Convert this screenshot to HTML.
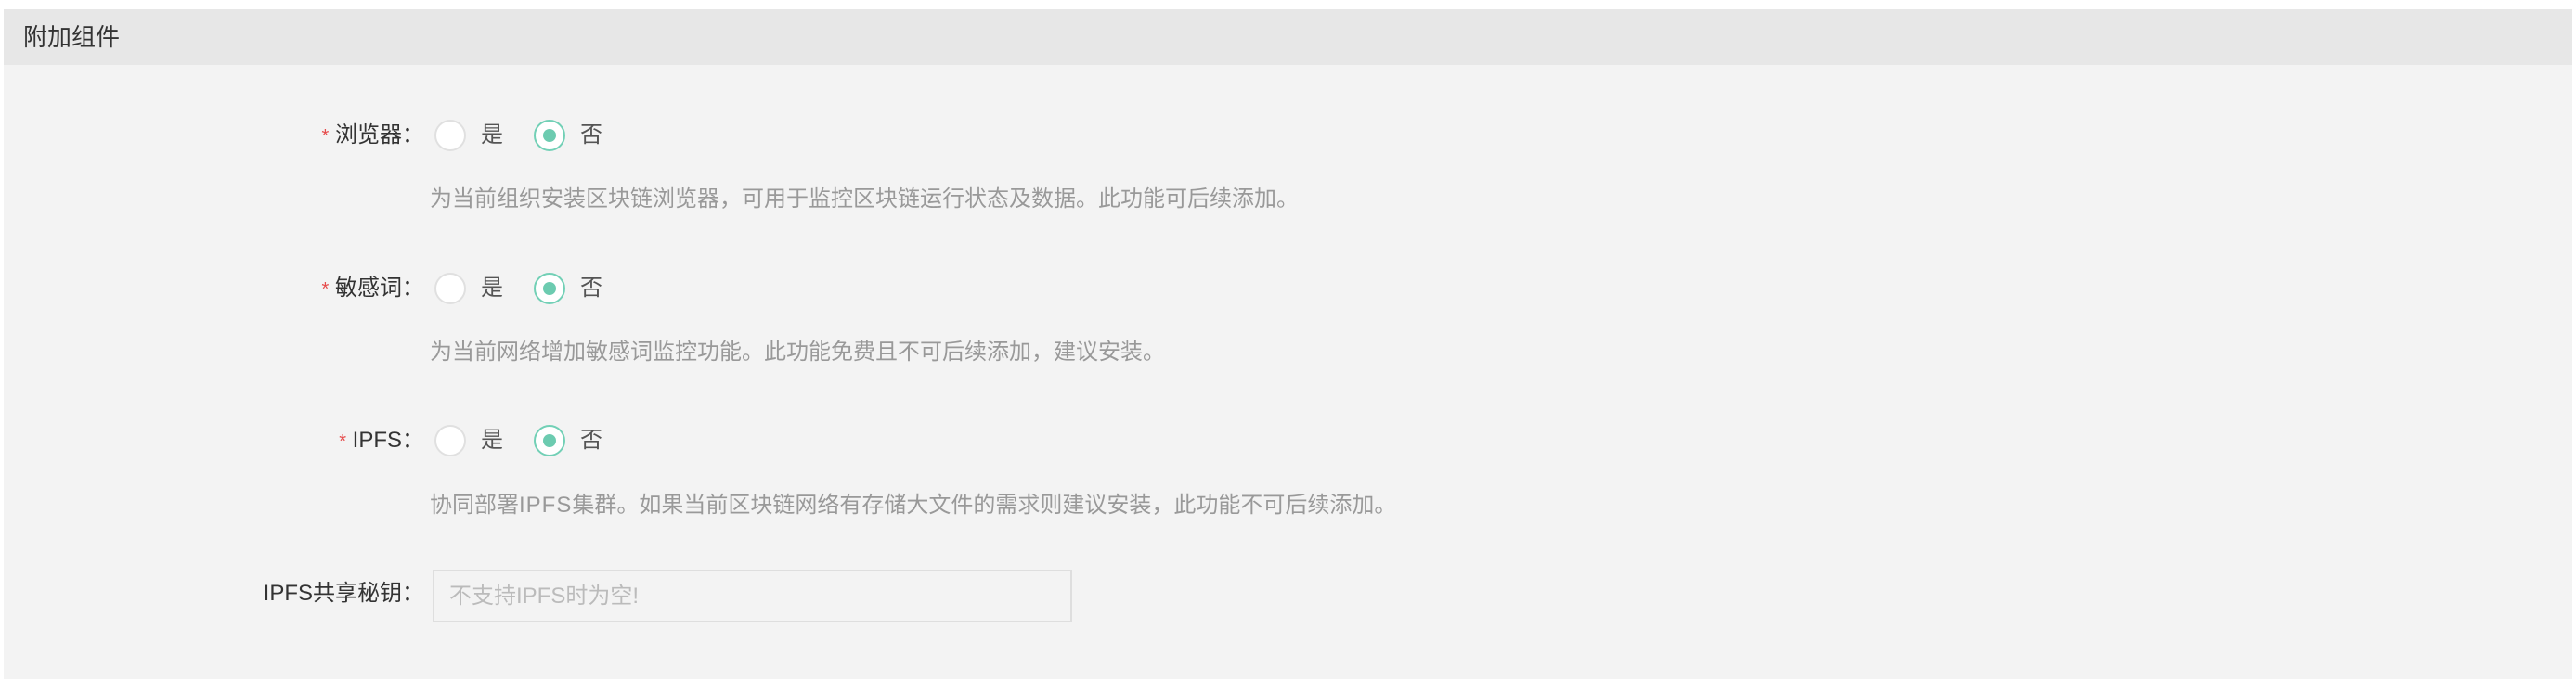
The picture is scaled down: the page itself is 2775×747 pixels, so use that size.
<!DOCTYPE html>
<html><head><meta charset="utf-8"><style>
html,body{margin:0;padding:0;background:#fff;width:2775px;height:747px;overflow:hidden}
body{font-family:"Liberation Sans","Noto Sans CJK SC",sans-serif;position:relative}
.panel{position:absolute;left:4px;top:10px;width:2767px;height:722px;background:#f3f3f3}
.hdr{position:absolute;left:0;top:0;width:100%;height:60px;background:#e7e7e7}
.hdr span{position:absolute;left:21px;top:16px;font-size:26px;line-height:28px;color:#333}
.t{position:absolute;font-size:24px;line-height:24px;white-space:nowrap}
.lbl{color:#333;text-align:right;right:2318px}
.star{color:#e64a4a;font-size:20px}
.desc{color:#999;left:463px}
.r{position:absolute;width:34px;height:34px;border-radius:50%;box-sizing:border-box}
.off{background:#fff;border:2px solid #e0e0e0}
.on{background:#fff;border:2px solid #72d0b6}
.on:after{content:"";position:absolute;left:8px;top:8px;width:14px;height:14px;border-radius:50%;background:#6ccbb0}
.opt{color:#555}
.inp{position:absolute;left:466px;top:614px;width:689px;height:57px;box-sizing:border-box;border:2px solid #dedede;background:#f3f3f3}
.inp span{position:absolute;left:16px;top:15px;font-size:24px;line-height:24px;color:#bbb}
</style></head><body>
<div class="panel"><div class="hdr"><span>附加组件</span></div></div>

<div class="t lbl" style="top:134px"><span class="star">*</span> 浏览器：</div>
<div class="r off" style="left:468px;top:129px"></div><div class="t opt" style="left:518px;top:134px">是</div>
<div class="r on" style="left:575px;top:129px"></div><div class="t opt" style="left:625px;top:134px">否</div>
<div class="t desc" style="top:203px">为当前组织安装区块链浏览器，可用于监控区块链运行状态及数据。此功能可后续添加。</div>

<div class="t lbl" style="top:299px"><span class="star">*</span> 敏感词：</div>
<div class="r off" style="left:468px;top:294px"></div><div class="t opt" style="left:518px;top:299px">是</div>
<div class="r on" style="left:575px;top:294px"></div><div class="t opt" style="left:625px;top:299px">否</div>
<div class="t desc" style="top:368px">为当前网络增加敏感词监控功能。此功能免费且不可后续添加，建议安装。</div>

<div class="t lbl" style="top:463px"><span class="star">*</span> IPFS：</div>
<div class="r off" style="left:468px;top:458px"></div><div class="t opt" style="left:518px;top:463px">是</div>
<div class="r on" style="left:575px;top:458px"></div><div class="t opt" style="left:625px;top:463px">否</div>
<div class="t desc" style="top:533px">协同部署<span style="letter-spacing:1px">IPFS</span>集群。如果当前区块链网络有存储大文件的需求则建议安装，此功能不可后续添加。</div>

<div class="t lbl" style="top:628px">IPFS共享秘钥：</div>
<div class="inp"><span>不支持IPFS时为空!</span></div>
</body></html>
